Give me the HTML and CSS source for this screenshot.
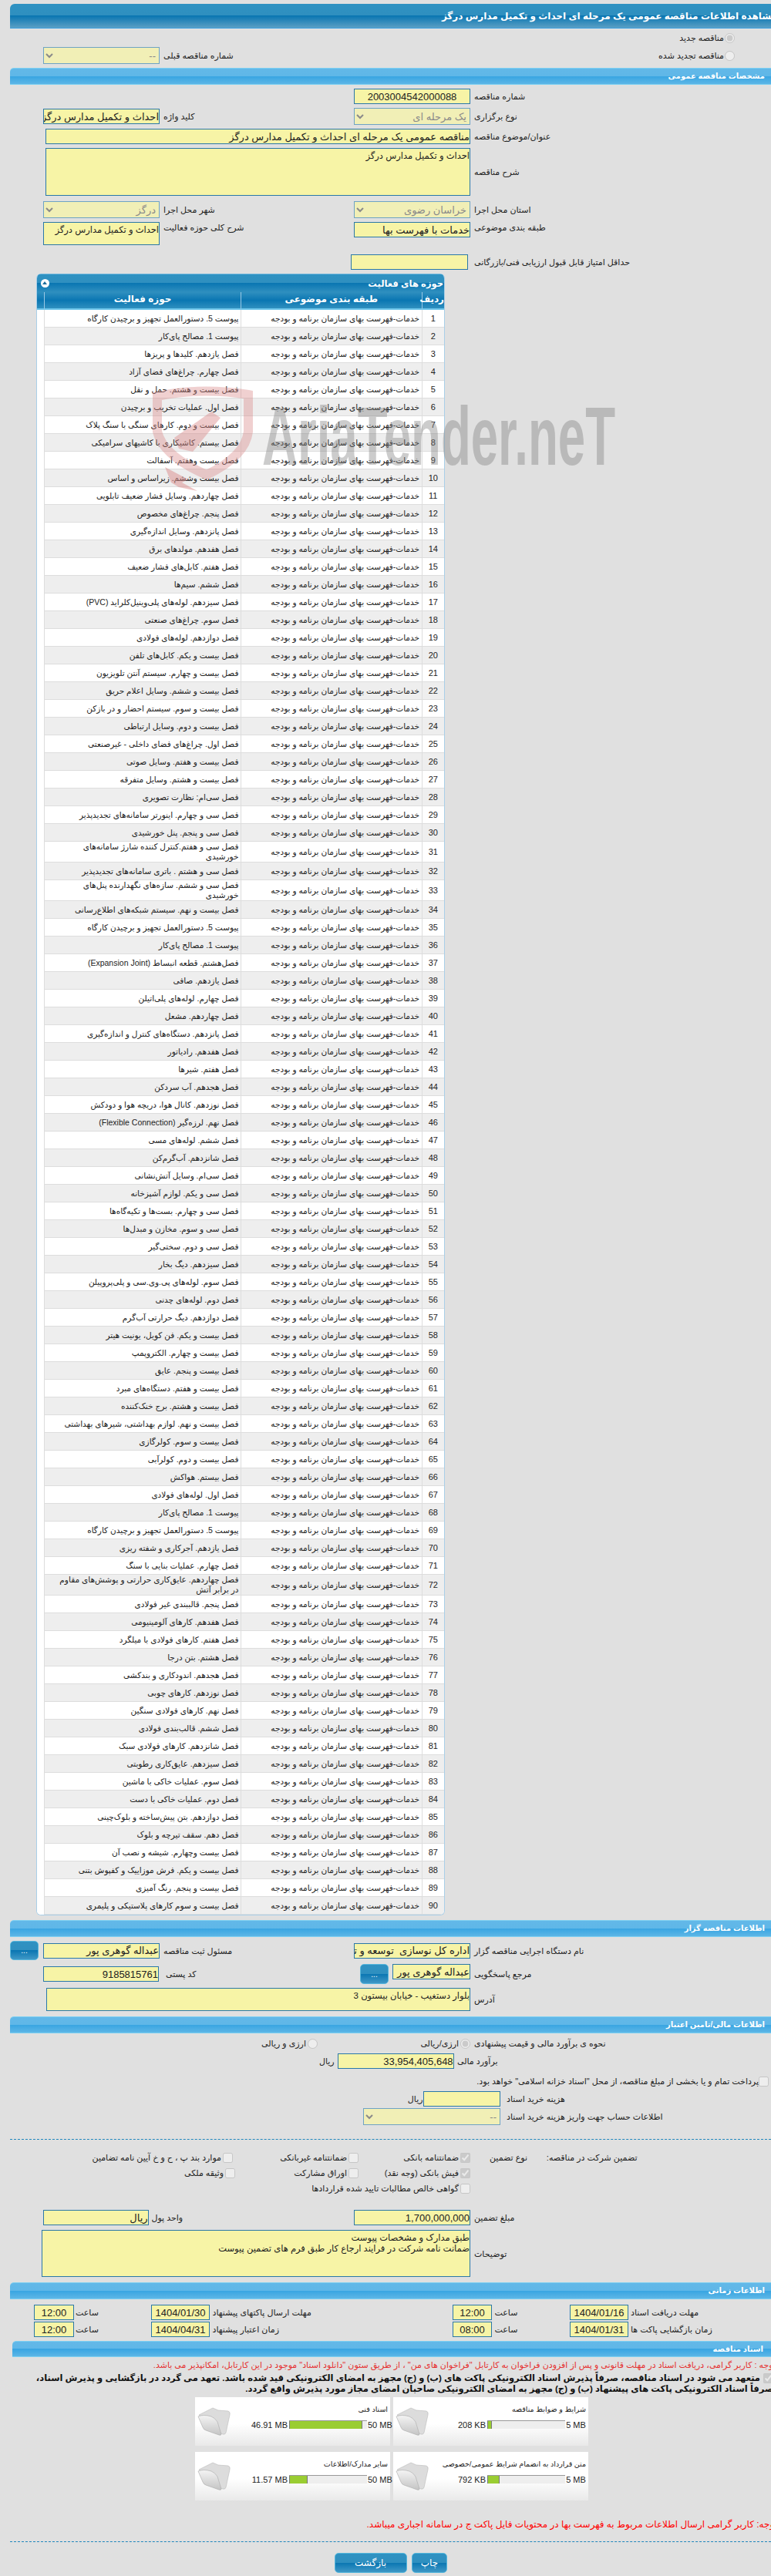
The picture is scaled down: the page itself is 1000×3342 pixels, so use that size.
FILE: index.html
```html
<!DOCTYPE html>
<html lang="fa" dir="rtl">
<head>
<meta charset="utf-8">
<title>مشاهده اطلاعات مناقصه</title>
<link rel="stylesheet" href="styles.css">
</head>
<body>
<svg width="0" height="0" class="defs"><defs>
<linearGradient id="fg" x1="0" y1="0" x2="0" y2="1"><stop offset="0" stop-color="#f4f4f4"/><stop offset="1" stop-color="#c4c4c4"/></linearGradient>
<symbol id="folder" viewBox="0 0 44 38">
<path d="M2 11 L20 2 L27 5 L40 6 Q43 7 42 11 L37 34 Q36 37 33 36 L25 33 Z" fill="#dcdcdc" stroke="#bbb" stroke-width=".6"/>
<path d="M1 13 Q8 10 18 13 Q23 15 26 20 L31 36 Q31 38 28 37 L11 31 Q8 30 7 27 Z" fill="url(#fg)" stroke="#aaa" stroke-width=".6"/>
</symbol>
</defs></svg>
<div class="page">
<h1 class="title"><span>مشاهده اطلاعات مناقصه عمومی یک مرحله ای احداث و تکمیل مدارس درگز</span></h1>

<div class="row-radio first"><input type="radio" disabled checked class="rad"><span>مناقصه جدید</span></div>
<div class="row-prev">
  <div class="row-radio"><input type="radio" disabled class="rad"><span>مناقصه تجدید شده</span></div>
  <label class="lab">شماره مناقصه قبلی</label>
  <select class="f sel w151" disabled><option>--</option></select>
</div>

<h2 class="sec m5">مشخصات مناقصه عمومی</h2>

<div class="row m5"><label class="lab">شماره مناقصه</label><input class="f mid" readonly value="2003004542000088"></div>
<div class="row m5 center"><label class="lab">نوع برگزاری</label><select class="f sel" disabled><option>یک مرحله ای</option></select><label class="lab">کلید واژه</label><input class="f" readonly value="احداث و تکمیل مدارس درگز"></div>
<div class="row m5"><label class="lab">عنوان/موضوع مناقصه</label><input class="f w551" readonly value="مناقصه عمومی یک مرحله ای احداث و تکمیل مدارس درگز"></div>
<div class="row m5 center"><label class="lab">شرح مناقصه</label><textarea class="f w551 h62" readonly>احداث و تکمیل مدارس درگز</textarea></div>
<div class="row m7"><label class="lab">استان محل اجرا</label><select class="f sel" disabled><option>خراسان رضوی</option></select><label class="lab">شهر محل اجرا</label><select class="f sel" disabled><option>درگز</option></select></div>
<div class="row m5 top"><label class="lab">طبقه بندی موضوعی</label><input class="f" readonly value="خدمات با فهرست بها"><label class="lab">شرح کلی حوزه فعالیت</label><textarea class="f h30" readonly>احداث و تکمیل مدارس درگز</textarea></div>
<div class="row-score"><label class="lab">حداقل امتیاز قابل قبول ارزیابی فنی/بازرگانی</label><input class="f" readonly></div>

<section class="panel">
  <div class="panel-head"><span>حوزه های فعالیت</span><i class="toggle"></i></div>
  <table class="grid">
    <colgroup><col class="c-n"><col class="c-a"><col class="c-b"><col class="c-s"></colgroup>
    <thead><tr><th class="th-n">ردیف</th><th>طبقه بندی موضوعی</th><th>حوزه فعالیت</th><th></th></tr></thead>
    <tbody>
<tr><td>1</td><td>خدمات-فهرست بهای سازمان برنامه و بودجه</td><td>پیوست 5. دستورالعمل تجهیز و برچیدن کارگاه</td><td class="strip" rowspan="90"></td></tr>
<tr><td>2</td><td>خدمات-فهرست بهای سازمان برنامه و بودجه</td><td>پیوست 1. مصالح پای‌کار</td></tr>
<tr><td>3</td><td>خدمات-فهرست بهای سازمان برنامه و بودجه</td><td>فصل یازدهم. کلیدها و پریزها</td></tr>
<tr><td>4</td><td>خدمات-فهرست بهای سازمان برنامه و بودجه</td><td>فصل چهارم. چراغ‌های فضای آزاد</td></tr>
<tr><td>5</td><td>خدمات-فهرست بهای سازمان برنامه و بودجه</td><td>فصل بیست و هشتم. حمل و نقل</td></tr>
<tr><td>6</td><td>خدمات-فهرست بهای سازمان برنامه و بودجه</td><td>فصل اول. عملیات تخریب و برچیدن</td></tr>
<tr><td>7</td><td>خدمات-فهرست بهای سازمان برنامه و بودجه</td><td>فصل بیست و دوم. کارهای سنگی با سنگ پلاک</td></tr>
<tr><td>8</td><td>خدمات-فهرست بهای سازمان برنامه و بودجه</td><td>فصل بیستم. کاشیکاری با کاشیهای سرامیکی</td></tr>
<tr><td>9</td><td>خدمات-فهرست بهای سازمان برنامه و بودجه</td><td>فصل بیست وهفتم. آسفالت</td></tr>
<tr><td>10</td><td>خدمات-فهرست بهای سازمان برنامه و بودجه</td><td>فصل بیست وششم. زیراساس و اساس</td></tr>
<tr><td>11</td><td>خدمات-فهرست بهای سازمان برنامه و بودجه</td><td>فصل چهاردهم. وسایل فشار ضعیف تابلویی</td></tr>
<tr><td>12</td><td>خدمات-فهرست بهای سازمان برنامه و بودجه</td><td>فصل پنجم. چراغ‌های مخصوص</td></tr>
<tr><td>13</td><td>خدمات-فهرست بهای سازمان برنامه و بودجه</td><td>فصل پانزدهم. وسایل اندازه‌گیری</td></tr>
<tr><td>14</td><td>خدمات-فهرست بهای سازمان برنامه و بودجه</td><td>فصل هفدهم. مولدهای برق</td></tr>
<tr><td>15</td><td>خدمات-فهرست بهای سازمان برنامه و بودجه</td><td>فصل هفتم. کابل‌های فشار ضعیف</td></tr>
<tr><td>16</td><td>خدمات-فهرست بهای سازمان برنامه و بودجه</td><td>فصل ششم. سیم‌ها</td></tr>
<tr><td>17</td><td>خدمات-فهرست بهای سازمان برنامه و بودجه</td><td>فصل سیزدهم. لوله‌های پلی‌وینیل‌کلراید (PVC)</td></tr>
<tr><td>18</td><td>خدمات-فهرست بهای سازمان برنامه و بودجه</td><td>فصل سوم. چراغ‌های صنعتی</td></tr>
<tr><td>19</td><td>خدمات-فهرست بهای سازمان برنامه و بودجه</td><td>فصل دوازدهم. لوله‌های فولادی</td></tr>
<tr><td>20</td><td>خدمات-فهرست بهای سازمان برنامه و بودجه</td><td>فصل بیست و یکم. کابل‌های تلفن</td></tr>
<tr><td>21</td><td>خدمات-فهرست بهای سازمان برنامه و بودجه</td><td>فصل بیست و چهارم. سیستم آنتن تلویزیون</td></tr>
<tr><td>22</td><td>خدمات-فهرست بهای سازمان برنامه و بودجه</td><td>فصل بیست و ششم. وسایل اعلام حریق</td></tr>
<tr><td>23</td><td>خدمات-فهرست بهای سازمان برنامه و بودجه</td><td>فصل بیست و سوم. سیستم احضار و در بازکن</td></tr>
<tr><td>24</td><td>خدمات-فهرست بهای سازمان برنامه و بودجه</td><td>فصل بیست و دوم. وسایل ارتباطی</td></tr>
<tr><td>25</td><td>خدمات-فهرست بهای سازمان برنامه و بودجه</td><td>فصل اول. چراغ‌های فضای داخلی - غیرصنعتی</td></tr>
<tr><td>26</td><td>خدمات-فهرست بهای سازمان برنامه و بودجه</td><td>فصل بیست و هفتم. وسایل صوتی</td></tr>
<tr><td>27</td><td>خدمات-فهرست بهای سازمان برنامه و بودجه</td><td>فصل بیست و هشتم. وسایل متفرقه</td></tr>
<tr><td>28</td><td>خدمات-فهرست بهای سازمان برنامه و بودجه</td><td>فصل سی‌ام: نظارت تصویری</td></tr>
<tr><td>29</td><td>خدمات-فهرست بهای سازمان برنامه و بودجه</td><td>فصل سی و چهارم. اینورتر سامانه‌های تجدیدپذیر</td></tr>
<tr><td>30</td><td>خدمات-فهرست بهای سازمان برنامه و بودجه</td><td>فصل سی و پنجم. پنل خورشیدی</td></tr>
<tr><td>31</td><td>خدمات-فهرست بهای سازمان برنامه و بودجه</td><td>فصل سی و هفتم.کنترل کننده شارژ سامانه‌های<br>خورشیدی</td></tr>
<tr><td>32</td><td>خدمات-فهرست بهای سازمان برنامه و بودجه</td><td>فصل سی و هشتم . باتری سامانه‌های تجدیدپذیر</td></tr>
<tr><td>33</td><td>خدمات-فهرست بهای سازمان برنامه و بودجه</td><td>فصل سی و ششم. سازه‌های نگهدارنده پنل‌های<br>خورشیدی</td></tr>
<tr><td>34</td><td>خدمات-فهرست بهای سازمان برنامه و بودجه</td><td>فصل بیست و نهم. سیستم شبکه‌های اطلاع‌رسانی</td></tr>
<tr><td>35</td><td>خدمات-فهرست بهای سازمان برنامه و بودجه</td><td>پیوست 5. دستورالعمل تجهیز و برچیدن کارگاه</td></tr>
<tr><td>36</td><td>خدمات-فهرست بهای سازمان برنامه و بودجه</td><td>پیوست 1. مصالح پای‌کار</td></tr>
<tr><td>37</td><td>خدمات-فهرست بهای سازمان برنامه و بودجه</td><td>فصل‌هشتم. قطعه انبساط (Expansion Joint)</td></tr>
<tr><td>38</td><td>خدمات-فهرست بهای سازمان برنامه و بودجه</td><td>فصل یازدهم. صافی</td></tr>
<tr><td>39</td><td>خدمات-فهرست بهای سازمان برنامه و بودجه</td><td>فصل چهارم. لوله‌های پلی‌اتیلن</td></tr>
<tr><td>40</td><td>خدمات-فهرست بهای سازمان برنامه و بودجه</td><td>فصل چهاردهم. مشعل</td></tr>
<tr><td>41</td><td>خدمات-فهرست بهای سازمان برنامه و بودجه</td><td>فصل پانزدهم. دستگاه‌های کنترل و اندازه‌گیری</td></tr>
<tr><td>42</td><td>خدمات-فهرست بهای سازمان برنامه و بودجه</td><td>فصل هفدهم. رادیاتور</td></tr>
<tr><td>43</td><td>خدمات-فهرست بهای سازمان برنامه و بودجه</td><td>فصل هفتم. شیرها</td></tr>
<tr><td>44</td><td>خدمات-فهرست بهای سازمان برنامه و بودجه</td><td>فصل هجدهم. آب سردکن</td></tr>
<tr><td>45</td><td>خدمات-فهرست بهای سازمان برنامه و بودجه</td><td>فصل نوزدهم. کانال هوا، دریچه هوا و دودکش</td></tr>
<tr><td>46</td><td>خدمات-فهرست بهای سازمان برنامه و بودجه</td><td>فصل نهم. لرزه‌گیر (Flexible Connection)</td></tr>
<tr><td>47</td><td>خدمات-فهرست بهای سازمان برنامه و بودجه</td><td>فصل ششم. لوله‌های مسی</td></tr>
<tr><td>48</td><td>خدمات-فهرست بهای سازمان برنامه و بودجه</td><td>فصل شانزدهم. آب‌گرم‌کن</td></tr>
<tr><td>49</td><td>خدمات-فهرست بهای سازمان برنامه و بودجه</td><td>فصل سی‌ام. وسایل آتش‌نشانی</td></tr>
<tr><td>50</td><td>خدمات-فهرست بهای سازمان برنامه و بودجه</td><td>فصل سی و یکم. لوازم آشپزخانه</td></tr>
<tr><td>51</td><td>خدمات-فهرست بهای سازمان برنامه و بودجه</td><td>فصل سی و چهارم. بست‌ها و تکیه‌گاه‌ها</td></tr>
<tr><td>52</td><td>خدمات-فهرست بهای سازمان برنامه و بودجه</td><td>فصل سی و سوم. مخازن و مبدل‌ها</td></tr>
<tr><td>53</td><td>خدمات-فهرست بهای سازمان برنامه و بودجه</td><td>فصل سی و دوم. سختی‌گیر</td></tr>
<tr><td>54</td><td>خدمات-فهرست بهای سازمان برنامه و بودجه</td><td>فصل سیزدهم. دیگ بخار</td></tr>
<tr><td>55</td><td>خدمات-فهرست بهای سازمان برنامه و بودجه</td><td>فصل سوم. لوله‌های پی.وی.سی و پلی‌پروپیلن</td></tr>
<tr><td>56</td><td>خدمات-فهرست بهای سازمان برنامه و بودجه</td><td>فصل دوم. لوله‌های چدنی</td></tr>
<tr><td>57</td><td>خدمات-فهرست بهای سازمان برنامه و بودجه</td><td>فصل دوازدهم. دیگ حرارتی آب‌گرم</td></tr>
<tr><td>58</td><td>خدمات-فهرست بهای سازمان برنامه و بودجه</td><td>فصل بیست و یکم. فن کویل، یونیت هیتر</td></tr>
<tr><td>59</td><td>خدمات-فهرست بهای سازمان برنامه و بودجه</td><td>فصل بیست و چهارم. الکتروپمپ</td></tr>
<tr><td>60</td><td>خدمات-فهرست بهای سازمان برنامه و بودجه</td><td>فصل بیست و پنجم. عایق</td></tr>
<tr><td>61</td><td>خدمات-فهرست بهای سازمان برنامه و بودجه</td><td>فصل بیست و هفتم. دستگاه‌های مبرد</td></tr>
<tr><td>62</td><td>خدمات-فهرست بهای سازمان برنامه و بودجه</td><td>فصل بیست و هشتم. برج خنک‌کننده</td></tr>
<tr><td>63</td><td>خدمات-فهرست بهای سازمان برنامه و بودجه</td><td>فصل بیست و نهم. لوازم بهداشتی، شیرهای بهداشتی</td></tr>
<tr><td>64</td><td>خدمات-فهرست بهای سازمان برنامه و بودجه</td><td>فصل بیست و سوم. کولرگازی</td></tr>
<tr><td>65</td><td>خدمات-فهرست بهای سازمان برنامه و بودجه</td><td>فصل بیست و دوم. کولرآبی</td></tr>
<tr><td>66</td><td>خدمات-فهرست بهای سازمان برنامه و بودجه</td><td>فصل بیستم. هواکش</td></tr>
<tr><td>67</td><td>خدمات-فهرست بهای سازمان برنامه و بودجه</td><td>فصل اول. لوله‌های فولادی</td></tr>
<tr><td>68</td><td>خدمات-فهرست بهای سازمان برنامه و بودجه</td><td>پیوست 1. مصالح پای‌کار</td></tr>
<tr><td>69</td><td>خدمات-فهرست بهای سازمان برنامه و بودجه</td><td>پیوست 5. دستورالعمل تجهیز و برچیدن کارگاه</td></tr>
<tr><td>70</td><td>خدمات-فهرست بهای سازمان برنامه و بودجه</td><td>فصل یازدهم. آجرکاری و شفته ریزی</td></tr>
<tr><td>71</td><td>خدمات-فهرست بهای سازمان برنامه و بودجه</td><td>فصل چهارم. عملیات بنایی با سنگ</td></tr>
<tr><td>72</td><td>خدمات-فهرست بهای سازمان برنامه و بودجه</td><td>فصل چهاردهم. عایق‌کاری حرارتی و پوشش‌های مقاوم<br>در برابر آتش</td></tr>
<tr><td>73</td><td>خدمات-فهرست بهای سازمان برنامه و بودجه</td><td>فصل پنجم. قالببندی غیر فولادی</td></tr>
<tr><td>74</td><td>خدمات-فهرست بهای سازمان برنامه و بودجه</td><td>فصل هفدهم. کارهای آلومینیومی</td></tr>
<tr><td>75</td><td>خدمات-فهرست بهای سازمان برنامه و بودجه</td><td>فصل هفتم. کارهای فولادی با میلگرد</td></tr>
<tr><td>76</td><td>خدمات-فهرست بهای سازمان برنامه و بودجه</td><td>فصل هشتم. بتن درجا</td></tr>
<tr><td>77</td><td>خدمات-فهرست بهای سازمان برنامه و بودجه</td><td>فصل هجدهم. اندودکاری و بندکشی</td></tr>
<tr><td>78</td><td>خدمات-فهرست بهای سازمان برنامه و بودجه</td><td>فصل نوزدهم. کارهای چوبی</td></tr>
<tr><td>79</td><td>خدمات-فهرست بهای سازمان برنامه و بودجه</td><td>فصل نهم. کارهای فولادی سنگین</td></tr>
<tr><td>80</td><td>خدمات-فهرست بهای سازمان برنامه و بودجه</td><td>فصل ششم. قالب‌بندی فولادی</td></tr>
<tr><td>81</td><td>خدمات-فهرست بهای سازمان برنامه و بودجه</td><td>فصل شانزدهم. کارهای فولادی سبک</td></tr>
<tr><td>82</td><td>خدمات-فهرست بهای سازمان برنامه و بودجه</td><td>فصل سیزدهم. عایق‌کاری رطوبتی</td></tr>
<tr><td>83</td><td>خدمات-فهرست بهای سازمان برنامه و بودجه</td><td>فصل سوم. عملیات خاکی با ماشین</td></tr>
<tr><td>84</td><td>خدمات-فهرست بهای سازمان برنامه و بودجه</td><td>فصل دوم. عملیات خاکی با دست</td></tr>
<tr><td>85</td><td>خدمات-فهرست بهای سازمان برنامه و بودجه</td><td>فصل دوازدهم. بتن پیش‌ساخته و بلوک‌چینی</td></tr>
<tr><td>86</td><td>خدمات-فهرست بهای سازمان برنامه و بودجه</td><td>فصل دهم. سقف تیرچه و بلوک</td></tr>
<tr><td>87</td><td>خدمات-فهرست بهای سازمان برنامه و بودجه</td><td>فصل بیست وچهارم. شیشه و نصب آن</td></tr>
<tr><td>88</td><td>خدمات-فهرست بهای سازمان برنامه و بودجه</td><td>فصل بیست و یکم. فرش موزاییک و کفپوش بتنی</td></tr>
<tr><td>89</td><td>خدمات-فهرست بهای سازمان برنامه و بودجه</td><td>فصل بیست و پنجم. رنگ آمیزی</td></tr>
<tr><td>90</td><td>خدمات-فهرست بهای سازمان برنامه و بودجه</td><td>فصل بیست و سوم کارهای پلاستیکی و پلیمری</td></tr>
    </tbody>
  </table>
</section>

<h2 class="sec m6">اطلاعات مناقصه گزار</h2>
<div class="row row-btn m5 center"><label class="lab">نام دستگاه اجرایی مناقصه گزار</label><input class="f" readonly value="اداره کل نوسازی  توسعه و تجهیز مدارس"><label class="lab">مسئول ثبت مناقصه</label><input class="f" readonly value="عبداله گوهری پور"><span></span><button class="btn dots">...</button></div>
<div class="row m5 center"><label class="lab">مرجع پاسخگویی</label><div class="combo"><input class="f w101" readonly value="عبداله گوهری پور"><button class="btn dots tall">...</button></div><label class="lab pad8">کد پستی</label><input class="f w150" readonly value="9185815761"></div>
<div class="row m5 center"><label class="lab">آدرس</label><textarea class="f w550 h30" readonly>بلوار دستغیب - خیابان بیستون 3</textarea></div>

<h2 class="sec m7">اطلاعات مالی/تامین اعتبار</h2>
<div class="flexrow m3 h20"><label class="lab w390">نحوه ی برآورد مالی و قیمت پیشنهادی</label>
  <div class="opt w198"><input type="radio" disabled checked class="rad"><span>ارزی/ریالی</span></div>
  <div class="opt"><input type="radio" disabled class="rad"><span>ارزی و ریالی</span></div></div>
<div class="flexrow m3"><label class="lab w411">برآورد مالی</label><input class="f w151" readonly value="33,954,405,648"><span class="unit">ریال</span></div>
<div class="check-row"><input type="checkbox" disabled class="chk"><span>پرداخت تمام و یا بخشی از مبلغ مناقصه، از محل "اسناد خزانه اسلامی" خواهد بود.</span></div>
<div class="flexrow m4"><label class="lab w351">هزینه خرید اسناد</label><input class="f w100" readonly><span class="unit tight">ریال</span></div>
<div class="flexrow m2"><label class="lab w351">اطلاعات حساب جهت واریز هزینه خرید اسناد</label><select class="f sel w178" disabled><option>--</option></select></div>
<hr class="dash m18">

<div class="g-row m13">
  <span class="g-a">تضمین شرکت در مناقصه:</span><span class="g-b">نوع تضمین</span>
  <div class="opt g1"><input type="checkbox" disabled checked class="chk"><span>ضمانتنامه بانکی</span></div>
  <div class="opt g2"><input type="checkbox" disabled class="chk"><span>ضمانتنامه غیربانکی</span></div>
  <div class="opt"><input type="checkbox" disabled class="chk"><span>موارد بند پ ، ح و خ آیین نامه تضامین</span></div>
</div>
<div class="g-row">
  <span class="g-a"></span><span class="g-b"></span>
  <div class="opt g1"><input type="checkbox" disabled checked class="chk"><span>فیش بانکی (وجه نقد)</span></div>
  <div class="opt g2b"><input type="checkbox" disabled class="chk"><span>اوراق مشارکت</span></div>
  <div class="opt"><input type="checkbox" disabled class="chk"><span>وثیقه ملکی</span></div>
</div>
<div class="g-row">
  <span class="g-a"></span><span class="g-b"></span>
  <div class="opt"><input type="checkbox" disabled class="chk"><span>گواهی خالص مطالبات تایید شده قراردادها</span></div>
</div>
<div class="flexrow m18"><label class="lab w390">مبلغ تضمین</label><input class="f w151" readonly value="1,700,000,000"><label class="lab w266">واحد پول</label><input class="f w137" readonly value="ریال"></div>
<div class="flexrow m6"><label class="lab w390">توضیحات</label><textarea class="f w556 h61" readonly>طبق مدارک و مشخصات پیوست
ضمانت نامه شرکت در فرایند ارجاع کار طبق فرم های تضمین پیوست</textarea></div>

<h2 class="sec m7">اطلاعات زمانی</h2>
<div class="flexrow m7"><label class="lab w185">مهلت دریافت اسناد</label><input class="f mid w76" readonly value="1404/01/16"><label class="lab w101">ساعت</label><input class="f mid w51" readonly value="12:00"><label class="lab w315">مهلت ارسال پاکتهای پیشنهاد</label><input class="f mid w76" readonly value="1404/01/30"><label class="lab w100">ساعت</label><input class="f mid w52" readonly value="12:00"></div>
<div class="flexrow m2"><label class="lab w185">زمان بازگشایی پاکت ها</label><input class="f mid w76" readonly value="1404/01/31"><label class="lab w101">ساعت</label><input class="f mid w51" readonly value="08:00"><label class="lab w315">زمان اعتبار پیشنهاد</label><input class="f mid w76" readonly value="1404/04/31"><label class="lab w100">ساعت</label><input class="f mid w52" readonly value="12:00"></div>

<h2 class="sec sec-doc">اسناد مناقصه</h2>
<p class="note">توجه : کاربر گرامی، دریافت اسناد در مهلت قانونی و پس از افزودن فراخوان به کارتابل "فراخوان های من" ، از طریق ستون "دانلود اسناد" موجود در این کارتابل، امکانپذیر می باشد.</p>
<p class="pledge"><input type="checkbox" disabled checked class="chk">متعهد می شود در اسناد مناقصه، صرفاً پذیرش اسناد الکترونیکی پاکت های (ب) و (ج) مجهز به امضای الکترونیکی قید شده باشد. تعهد می گردد در بازگشایی و پذیرش اسناد،<br>صرفاً اسناد الکترونیکی پاکت های پیشنهاد (ب) و (ج) مجهز به امضای الکترونیکی صاحبان امضای مجاز مورد پذیرش واقع گردد.</p>

<div class="cards">
  <article class="card"><div class="card-title">شرایط و ضوابط مناقصه</div><div class="meter"><span class="m-max">5 MB</span><span class="bar"><b style="width:6%"></b></span><span class="m-val">208 KB</span></div><svg class="folder"><use href="#folder"/></svg></article>
  <article class="card"><div class="card-title">اسناد فنی</div><div class="meter"><span class="m-max">50 MB</span><span class="bar"><b style="width:94%"></b></span><span class="m-val">46.91 MB</span></div><svg class="folder"><use href="#folder"/></svg></article>
  <article class="card"><div class="card-title">متن قرارداد به انضمام شرایط عمومی/خصوصی</div><div class="meter"><span class="m-max">5 MB</span><span class="bar"><b style="width:16%"></b></span><span class="m-val">792 KB</span></div><svg class="folder"><use href="#folder"/></svg></article>
  <article class="card"><div class="card-title">سایر مدارک/اطلاعات</div><div class="meter"><span class="m-max">50 MB</span><span class="bar"><b style="width:24%"></b></span><span class="m-val">11.57 MB</span></div><svg class="folder"><use href="#folder"/></svg></article>
</div>

<p class="note2">توجه: کاربر گرامی ارسال اطلاعات مربوط به فهرست بها در محتویات فایل پاکت ج در سامانه اجباری میباشد.</p>
<hr class="dash m15">
<div class="actions"><button class="btn act">چاپ</button><button class="btn act wide">بازگشت</button></div>

<svg class="watermark" viewBox="190 490 620 160" width="620" height="160" aria-hidden="true">
  <path d="M204 514 Q262 502 322 512 L322 560 Q318 592 268 616 Q212 592 204 560 Z" fill="none" stroke="#d98a8a" stroke-opacity=".4" stroke-width="12"/>
  <path d="M274 534 L286 542 L250 586 L232 582 L226 568 Z" fill="#d98a8a" fill-opacity=".45"/>
  <path d="M214 606 L244 622 L236 626 L256 637 L232 632 L222 626 Z" fill="#d98a8a" fill-opacity=".5"/>
  <text class="wm-text" x="340" y="603" textLength="458" lengthAdjust="spacingAndGlyphs" direction="ltr">AriaTender.neT</text>
</svg>
</div>
</body>
</html>
```
FILE: styles.css
```css
html, body { margin: 0; padding: 0; }
html { overflow-x: hidden; }
body {
  background: #e0e0e0;
  color: #222;
  font-family: "Liberation Sans", "DejaVu Sans", sans-serif;
  font-size: 11px;
  width: 1000px;
  height: 3342px;
  overflow: hidden;
}
.defs { position: absolute; }
.page { position: relative; width: 1000px; padding-top: 5px; }

.title {
  margin: 0 0 0 13px;
  height: 32px;
  box-sizing: border-box;
  padding-top: 8px;
  border-radius: 6px 0 0 0;
  border-bottom: 1px solid #3a9fe0;
  background: linear-gradient(#2f92c2 0, #2f8fbf 50%, #0a76b2 50%, #5a9fc4 100%);
  color: #fff;
  font-size: 12px;
  font-weight: bold;
  line-height: 16px;
  white-space: nowrap;
  overflow: hidden;
}
.title span { display: inline-block; margin-right: -8px; }

.sec {
  margin: 0 0 0 13px;
  height: 22px;
  box-sizing: border-box;
  border-top: 1px solid #7dd0f2;
  border-bottom: 1px solid #7dd0f2;
  border-radius: 5px 0 0 0;
  padding: 2px 8px 0 0;
  background: linear-gradient(#62b8e8 0, #5fb7e8 50%, #38a5e2 50%, #5db6e6 100%);
  color: #fff;
  font-size: 10px;
  font-weight: bold;
  line-height: 16px;
}
.sec-doc { margin: 5px 0 0 15.5px; height: 21px; padding-right: 10px; }

.m2 { margin-top: 2px; } .m3 { margin-top: 3px; } .m4 { margin-top: 4px; }
.m5 { margin-top: 5px; } .m6 { margin-top: 6px; } .m7 { margin-top: 7px; }
.m13 { margin-top: 13px; } .m15 { margin-top: 15px; } .m18 { margin-top: 18px; }

.f {
  box-sizing: border-box;
  display: block;
  width: 100%;
  height: 20px;
  margin: 0;
  padding: 0;
  border: 1px solid #2a78a8;
  border-radius: 0;
  background: #f7f4a6;
  color: #222;
  font-family: inherit;
  font-size: 13px;
  line-height: 14px;
  outline: none;
  resize: none;
  overflow: hidden;
}
textarea.f { font-size: 11.5px; line-height: 14px; padding-top: 2px; }
.sel { height: 22px; background: #f1efb6; border-color: #6ea3c4; color: #8a8a8a; font-size: 13px; opacity: 1; }
.mid { text-align: center; }
.lab { box-sizing: border-box; display: block; font-size: 11px; line-height: 14px; text-align: left; padding-left: 5px; white-space: nowrap; }

.row { display: grid; grid-template-columns: 390px 151px 252px 151px; align-items: center; }
.row.top { align-items: start; }
.row-btn { grid-template-columns: 390px 151px 252px 151px 6px 37px; }
.row-prev { display: grid; grid-template-columns: 541px 252px 151px; align-items: center; height: 22px; margin-top: 0; }
.row-radio { display: flex; align-items: center; gap: 1px; padding-right: 47px; font-size: 11px; }
.row-radio.first { height: 24px; }
.row-score { display: grid; grid-template-columns: 393.5px 151.5px; margin-top: 12px; align-items: center; }
.row-score .lab { padding-left: 8.5px; }
.rad { width: 13px; height: 13px; margin: 0; flex: none; }
.chk { width: 13px; height: 13px; margin: 0; flex: none; }

.w551 { width: 551px; } .w550 { width: 550px; } .w556 { width: 556px; }
.w151 { width: 151px; } .w150 { width: 150px; justify-self: end; } .w101 { width: 101px; }
.w100 { width: 100.5px; } .w178 { width: 178px; } .w137 { width: 136.6px; }
.w76 { width: 76px; } .w51 { width: 51px; } .w52 { width: 52px; }
.h62 { height: 62px; } .h61 { height: 61px; } .h30 { height: 30px; } .h20 { height: 20px; }
.pad8 { padding-left: 8px; }

.flexrow { display: flex; align-items: center; }
.lab.w390 { width: 390px; } .lab.w411 { width: 411.4px; padding-left: 4.4px; }
.lab.w351 { width: 351px; padding-left: 8px; }
.lab.w266 { width: 266.4px; padding-left: 3.8px; }
.lab.w185 { width: 185px; padding-left: 3px; }
.lab.w101 { width: 101px; padding-left: 3.5px; }
.lab.w315 { width: 315px; padding-left: 3.5px; }
.lab.w100 { width: 100px; padding-left: 2px; }
.opt { display: flex; align-items: center; gap: 2px; white-space: nowrap; flex: none; font-size: 11px; }
.w198 { width: 198px; }
.unit { margin-right: 4px; font-size: 11px; }
.unit.tight { margin-right: 0; }
.combo { display: flex; gap: 5px; width: 143px; }
.combo .f { flex: none; }

.check-row { display: flex; align-items: center; height: 18px; margin-top: 7px; padding-right: 3px; gap: 0; font-size: 11px; white-space: nowrap; }

.btn {
  box-sizing: border-box;
  border: 1px solid #55b6dc;
  border-radius: 5px;
  background: linear-gradient(#2f92c2 0, #2f8fbf 50%, #0a76b2 50%, #3f98c6 100%);
  color: #fff;
  font-family: inherit;
  padding: 0;
  font-size: 12px;
}
.dots { width: 37px; height: 25px; font-size: 10px; }
.dots.tall { height: 26px; flex: none; }
.act { height: 26px; width: 46px; }
.act.wide { width: 94px; }
.actions { display: flex; gap: 6.5px; margin-top: 14px; padding-right: 420px; }

.dash { border: 0; border-top: 1px dashed #1f86bd; margin-bottom: 0; margin-left: 13px; margin-right: 0; height: 0; }

.g-row { display: flex; align-items: center; height: 20px; font-size: 11px; }
.g-a { width: 316px; padding-right: 173.5px; box-sizing: border-box; white-space: nowrap; flex: none; }
.g-b { width: 74px; white-space: nowrap; flex: none; }
.g1 { width: 145px; } .g2 { width: 163px; } .g2b { width: 160px; }

.panel {
  box-sizing: border-box;
  width: 530.5px;
  margin: 5px 423px 0 0;
  background: #fff;
  border: 1px solid #a9cfe8;
  border-top: 0;
  border-radius: 6px 6px 6px 6px;
  overflow: hidden;
}
.panel-head {
  display: flex;
  justify-content: space-between;
  align-items: center;
  box-sizing: border-box;
  height: 24px;
  padding: 0 1px 0 5px;
  background: linear-gradient(#2f92c2 0, #2f8fbf 50%, #0a76b2 50%, #2f8fbf 100%);
  border-top: 1px solid #6fb5dc;
  color: #fff;
  font-size: 11.5px;
  font-weight: bold;
}
.toggle { display: block; width: 11px; height: 11px; border-radius: 50%; background: #fff; position: relative; }
.toggle::after {
  content: "";
  position: absolute;
  left: 2.5px;
  top: 3px;
  border: 3px solid transparent;
  border-top: 0;
  border-bottom: 4px solid #1e6f9c;
}
.grid { border-collapse: separate; border-spacing: 0; table-layout: fixed; width: 100%; }
.c-n { width: 29.5px; } .c-a { width: 234.5px; } .c-b { width: 255px; } .c-s { width: 10.5px; }
.grid th {
  height: 23px;
  box-sizing: border-box;
  padding: 0 0 4px;
  background: linear-gradient(#2f8fbf 0, #0a76b2 50%, #2f8fbf 100%);
  border-bottom: 2px solid #6cc4ea;
  border-left: 1px solid #9ac8e4;
  color: #fff;
  font-size: 12px;
  font-weight: bold;
  line-height: 14px;
}
.grid th:last-child { border-left: 0; }
.grid td {
  height: 23px;
  box-sizing: border-box;
  padding: 0 2.5px 0 0;
  border-bottom: 1px solid #ddd;
  border-left: 1px solid #ddd;
  font-size: 10.5px;
  line-height: 13px;
  white-space: nowrap;
  vertical-align: middle;
  text-align: right;
}
.grid td:first-child { padding: 0; text-align: center; font-size: 11px; }
.grid tbody tr:nth-child(even) td { background: #eee; }
.grid td.strip { background: #fff; border: 0; border-left: 0; }

.note { margin: 3px -6px 0 0; height: 14px; color: #e53030; font-size: 11px; line-height: 14px; white-space: nowrap; }
.pledge { margin: 3px -3px 0 0; width: 1000px; height: 28px; font-size: 11.5px; font-weight: bold; line-height: 14px; color: #111; white-space: nowrap; }
.pledge .chk { vertical-align: -3px; margin-left: 4px; }

.cards { display: grid; grid-template-columns: 253px 253px; gap: 8px 4px; margin: 4px 237px 0 0; }
.card {
  position: relative;
  box-sizing: border-box;
  height: 63px;
  padding: 9px 3px 0 0;
  background: linear-gradient(#fff 55%, #e9e9e9 100%);
}
.card-title { font-size: 9.5px; line-height: 14px; white-space: nowrap; }
.meter { display: flex; align-items: center; margin-top: 7px; direction: rtl; height: 11px; font-size: 11px; }
.m-max { flex: none; width: 26px; white-space: nowrap; direction: ltr; text-align: center; }
.bar { flex: none; display: block; width: 101px; height: 11px; box-sizing: border-box; border-top: 1px solid #999; background: #eee; margin: 0 1px; position: relative; }
.bar b { position: absolute; left: 0; top: 0; bottom: 0; background: #9acd32; border-left: 1px solid #777; border-right: 1px solid #777; box-sizing: border-box; }
.m-val { flex: none; direction: ltr; white-space: nowrap; margin-right: 1px; }
.folder { position: absolute; left: 3px; top: 12px; width: 44px; height: 38px; }

.note2 { margin: 24px -8px 0 0; height: 14px; color: #f00; font-size: 12px; line-height: 14px; white-space: nowrap; }

.watermark { position: absolute; left: 190px; top: 490px; pointer-events: none; }
.wm-text {
  font-family: "Liberation Sans Narrow", "Liberation Sans", sans-serif;
  font-size: 108px;
  font-weight: bold;
  fill: #808080;
  fill-opacity: .4;
}
```
